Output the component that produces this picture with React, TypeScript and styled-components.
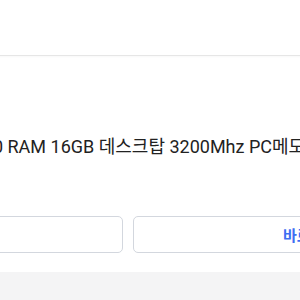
import React from "react";
import styled, { createGlobalStyle } from "styled-components";

const Global = createGlobalStyle`
  *, *::before, *::after { box-sizing: border-box; }
  html, body { margin: 0; padding: 0; background: #f4f4f5; overflow: hidden; }
  body { font-family: Roboto, "Noto Sans CJK KR", sans-serif; }
`;

const Page = styled.div`
  width: 760px;
  margin-left: -252px;
  display: flex;
  flex-direction: column;
  background: #fff;
  box-shadow: 0 2px 6px rgba(0, 0, 0, 0.08);
`;

const Header = styled.header`
  height: 56px;
  border-bottom: 1px solid #e6e6e6;
  box-shadow: 0 1px 2px rgba(0, 0, 0, 0.03);
`;

const Body = styled.div`
  padding: 79px 20px 19px;
  height: 216px;
  display: flex;
  flex-direction: column;
`;

const Title = styled.p`
  margin: 0;
  font-size: 18px;
  line-height: 24px;
  color: #222;
  white-space: nowrap;
  text-align: center;
`;

const Actions = styled.div`
  margin-top: auto;
  display: grid;
  grid-template-columns: 1fr 1fr;
  gap: 10px;
`;

const Button = styled.button<{ $primary?: boolean }>`
  height: 37px;
  border: 1px solid #d3d7de;
  border-radius: 5px;
  background: #fff;
  font-family: "Noto Sans CJK KR", Roboto, sans-serif;
  font-size: 15px;
  font-weight: 700;
  color: ${(p) => (p.$primary ? "#3d6ef2" : "#333")};
`;

export default function App() {
  return (
    <>
      <Global />
      <Page>
        <Header />
        <Body>
          <Title>DDR4 3200 RAM 16GB 데스크탑 3200Mhz PC메모리 팝</Title>
          <Actions>
            <Button>취소</Button>
            <Button $primary>바로구매</Button>
          </Actions>
        </Body>
      </Page>
    </>
  );
}
